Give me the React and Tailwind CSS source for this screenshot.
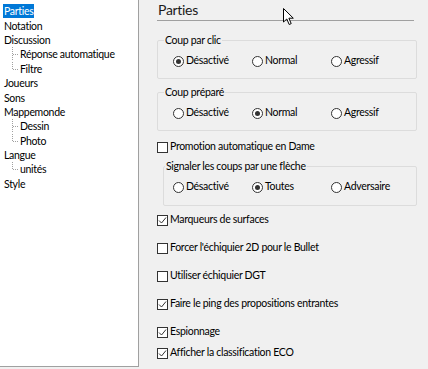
import React from 'react'

const tree = [
  { label: 'Parties', selected: true },
  { label: 'Notation' },
  { label: 'Discussion', children: ['Réponse automatique', 'Filtre'] },
  { label: 'Joueurs' },
  { label: 'Sons' },
  { label: 'Mappemonde', children: ['Dessin', 'Photo'] },
  { label: 'Langue', children: ['unités'] },
  { label: 'Style' },
]

function Branch({ last }) {
  return (
    <svg width="16" height="14" viewBox="0 0 16 14" className="shrink-0">
      <line x1="9.5" y1="0" x2="9.5" y2={last ? 7 : 14} stroke="#a0a0a0" strokeDasharray="1 1" />
      <line x1="10" y1="7.5" x2="16" y2="7.5" stroke="#a0a0a0" strokeDasharray="1 1" />
    </svg>
  )
}

function Radio({ label, checked }) {
  return (
    <div className="flex w-[79px] items-center gap-[2px]">
      <span className="flex h-[11px] w-[11px] shrink-0 items-center justify-center rounded-full border border-[#333] bg-white">
        {checked && <span className="h-[5px] w-[5px] rounded-full bg-[#333]" />}
      </span>
      <span>{label}</span>
    </div>
  )
}

function Check({ label, checked, className = '' }) {
  return (
    <div className={`flex h-[14px] items-center gap-[2px] ${className}`}>
      <span className="flex h-[11px] w-[11px] shrink-0 items-center justify-center border border-[#333] bg-white">
        {checked && (
          <svg width="9" height="9" viewBox="0 0 9 9">
            <polyline points="1,4.5 3.5,7 8,1.5" fill="none" stroke="#333" strokeWidth="1" />
          </svg>
        )}
      </span>
      <span>{label}</span>
    </div>
  )
}

function Group({ title, options, value, className = '', inset = false }) {
  return (
    <fieldset
      className={`rounded-[2px] border border-[#dcdcdc] pt-[7px] ${inset ? 'w-[254px] ml-[6px] pl-[1px] pb-[11px]' : 'w-[260px] pl-[6px] pb-[10px]'} ${className}`}
    >
      <legend className="px-[1px] leading-[14px]">{title}</legend>
      <div className={`flex h-[14px] items-center ${inset ? 'pl-[8px]' : 'pl-[9px]'}`}>
        {options.map((o) => (
          <Radio key={o} label={o} checked={o === value} />
        ))}
      </div>
    </fieldset>
  )
}

export default function App() {
  return (
    <div className="flex h-[369px] w-[428px] bg-[#f0f0f0] font-['Lato',sans-serif] text-[10.5px] tracking-[-0.3px] text-black">
      {/* tree */}
      <div className="h-[367px] w-[139px] shrink-0 border-r border-b border-[#a0a0a0] bg-white pt-[4px] pl-[3px]">
        {tree.map((item) => (
          <div key={item.label}>
            <div className="flex h-[14.4px] items-center">
              <span className={`px-[1px] leading-[14px] ${item.selected ? 'bg-[#0078d7] text-white' : ''}`}>
                {item.label}
              </span>
            </div>
            {item.children &&
              item.children.map((c, i) => (
                <div key={c} className="flex h-[14.4px] items-center">
                  <Branch last={i === item.children.length - 1} />
                  <span className="px-[1px] leading-[14px]">{c}</span>
                </div>
              ))}
          </div>
        ))}
      </div>

      {/* settings */}
      <div className="relative flex-1 pl-[18px]">
        <div className="h-[21px] w-[257px] border-b border-[#a0a0a0] pl-[1px] text-[14px] leading-[20px] text-[#1a1a1a]">
          Parties
        </div>

        <Group className="mt-[12px]" title="Coup par clic" options={['Désactivé', 'Normal', 'Agressif']} value="Désactivé" />
        <Group className="mt-[6px]" title="Coup préparé" options={['Désactivé', 'Normal', 'Agressif']} value="Normal" />

        <Check className="mt-[9px]" label="Promotion automatique en Dame" />

        <Group
          inset
          className="mt-[5px]"
          title="Signaler les coups par une flèche"
          options={['Désactivé', 'Toutes', 'Adversaire']}
          value="Toutes"
        />

        <Check className="mt-[7px]" label="Marqueurs de surfaces" checked />
        <Check className="mt-[14px]" label="Forcer l'échiquier 2D pour le Bullet" />
        <Check className="mt-[14px]" label="Utiliser échiquier DGT" />
        <Check className="mt-[14px]" label="Faire le ping des propositions entrantes" checked />
        <Check className="mt-[14px]" label="Espionnage" checked />
        <Check className="mt-[7px]" label="Afficher la classification ECO" checked />

        {/* mouse pointer */}
        <svg className="absolute left-[144px] top-[8px]" width="12" height="18" viewBox="0 0 12 18">
          <path d="M0.5 0.5 L0.5 14 L3.8 11 L6.2 16.5 L8.2 15.6 L5.9 10.2 L10.3 10.2 Z" fill="white" stroke="black" strokeWidth="1" strokeLinejoin="round" />
        </svg>
      </div>
    </div>
  )
}
